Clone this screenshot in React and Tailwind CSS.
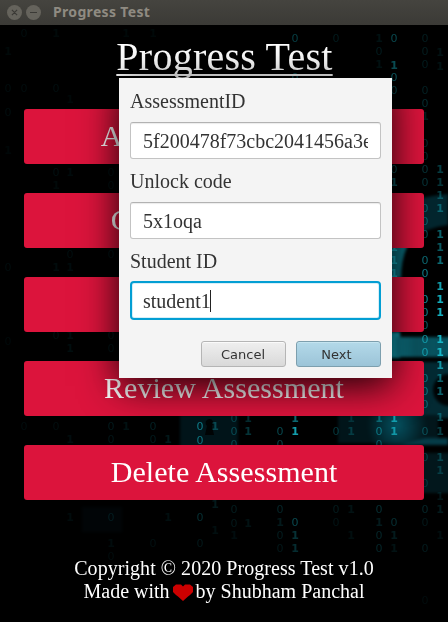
import React from 'react';

const MENU = ['Attempt Assessment', 'Create Assessment', 'Edit Assessment', 'Review Assessment', 'Delete Assessment'];

// Falling binary digits: [x centre, y centre, digit, opacity]
const DIGITS = [
  [295, 38, 0, 0.35], [295, 77, 0, 0.45],
  [336, 38, 0, 0.15], [379, 64, 1, 0.1], [379, 51, 0, 0.15], [379, 38, 1, 0.1],
  [394, 38, 0, 0.4], [394, 65, 1, 0.45], [394, 77, 0, 0.5], [394, 90, 0, 0.35],
  [425, 38, 0, 0.15], [425, 51, 0, 0.15], [425, 64, 0, 0.15], [425, 90, 0, 0.18], [425, 103, 0, 0.25], [425, 116, 1, 0.15],
  [425, 143, 0, 0.22], [425, 156, 0, 0.22], [425, 169, 0, 0.28], [425, 182, 0, 0.28],
  [440, 52, 1, 0.1], [440, 66, 1, 0.1],
  [440, 169, 1, 0.35], [440, 182, 1, 0.3], [440, 195, 1, 0.35], [440, 208, 1, 0.45],
  [394, 169, 0, 0.4], [394, 182, 1, 0.45],
  [425, 208, 0, 0.4], [425, 221, 0, 0.4], [425, 234, 0, 0.4],
  [440, 234, 1, 0.55], [440, 247, 1, 0.5], [440, 260, 1, 0.6],
  [394, 247, 1, 0.8], [394, 260, 1, 0.8], [394, 273, 1, 0.8],
  [425, 260, 0, 0.6], [425, 273, 0, 0.7],
  [440, 286, 1, 0.9], [440, 299, 1, 1], [440, 312, 1, 1],
  [425, 299, 0, 0.8], [425, 312, 0, 0.7], [425, 325, 0, 0.5],
  [425, 339, 0, 0.75], [440, 339, 1, 1], [425, 352, 0, 0.75], [440, 352, 1, 1],
  [440, 365, 1, 0.8], [425, 378, 0, 0.5], [440, 378, 1, 0.55],
  [425, 391, 0, 0.5], [440, 391, 1, 0.55], [425, 404, 0, 0.45], [440, 417, 1, 0.4],
  [425, 431, 0, 0.35], [440, 431, 1, 0.35], [440, 457, 1, 0.3], [440, 470, 1, 0.25], [425, 457, 0, 0.25], [425, 483, 0, 0.2], [440, 496, 1, 0.12],
  [394, 418, 1, 0.8], [394, 431, 1, 0.75], [379, 418, 1, 0.45], [379, 431, 0, 0.55], [379, 444, 0, 0.4],
  [336, 431, 0, 0.3], [351, 418, 1, 0.2], [351, 431, 1, 0.25],
  [295, 418, 1, 0.6], [295, 431, 1, 0.9], [280, 431, 0, 0.4], [280, 444, 0, 0.35],
  [234, 418, 0, 0.3], [234, 431, 0, 0.35], [234, 444, 0, 0.3], [248, 418, 1, 0.25], [248, 431, 1, 0.3],
  [200, 426, 0, 0.65], [200, 440, 0, 0.6], [215, 426, 1, 0.35],
  [200, 517, 0, 0.25], [215, 504, 1, 0.14], [200, 543, 0, 0.12], [215, 530, 1, 0.08], [168, 517, 1, 0.08],
  [234, 509, 0, 0.15], [234, 523, 0, 0.12], [248, 523, 1, 0.1], [234, 535, 1, 0.07],
  [280, 509, 0, 0.2], [295, 522, 0, 0.4], [295, 535, 1, 0.28], [295, 548, 1, 0.25], [280, 522, 1, 0.14], [280, 535, 0, 0.15], [280, 548, 0, 0.12],
  [336, 509, 0, 0.14], [351, 509, 1, 0.1], [336, 522, 0, 0.1], [351, 535, 1, 0.08],
  [379, 509, 0, 0.25], [379, 522, 1, 0.15], [394, 522, 0, 0.25], [379, 535, 0, 0.2], [394, 535, 1, 0.15], [379, 548, 0, 0.2], [394, 548, 1, 0.1],
  [425, 509, 0, 0.2], [440, 509, 1, 0.15], [425, 522, 0, 0.12], [425, 548, 0, 0.14], [440, 535, 1, 0.08], [425, 600, 0, 0.06],
  [24, 33, 0, 0.06], [8, 51, 1, 0.05], [56, 33, 1, 0.05], [8, 88, 0, 0.06], [24, 88, 0, 0.06], [56, 88, 0, 0.07], [70, 99, 1, 0.05], [8, 112, 0, 0.07],
  [126, 33, 1, 0.05], [153, 33, 1, 0.05], [8, 150, 1, 0.04], [56, 172, 0, 0.08], [70, 172, 1, 0.06], [56, 185, 1, 0.05], [111, 172, 0, 0.08], [111, 185, 0, 0.08],
  [56, 267, 1, 0.06], [70, 254, 0, 0.08], [70, 267, 1, 0.07], [111, 254, 0, 0.09], [8, 267, 0, 0.06],
  [8, 341, 0, 0.05], [56, 335, 0, 0.08], [70, 335, 1, 0.08], [70, 348, 1, 0.08], [111, 335, 0, 0.1], [111, 348, 0, 0.1],
  [56, 426, 0, 0.07], [24, 426, 0, 0.06], [70, 439, 1, 0.07], [111, 426, 0, 0.14], [111, 439, 0, 0.11], [126, 426, 1, 0.1],
  [153, 426, 0, 0.18], [153, 439, 0, 0.14], [168, 439, 1, 0.14],
  [70, 517, 1, 0.06], [111, 517, 0, 0.13], [111, 543, 1, 0.06], [153, 543, 0, 0.08], [111, 556, 0, 0.06],
];

function Backdrop() {
  return (
    <svg className="absolute inset-0 h-full w-full" viewBox="0 0 448 597" aria-hidden="true">
      <defs>
        <filter id="soft" x="-20%" y="-20%" width="140%" height="140%" colorInterpolationFilters="sRGB">
          <feGaussianBlur stdDeviation="1.5" />
        </filter>
        <filter id="glyph" colorInterpolationFilters="sRGB">
          <feGaussianBlur stdDeviation="0.35" />
        </filter>
        <linearGradient id="beam" x1="0" x2="1">
          <stop offset="0" stopColor="#0f8496" />
          <stop offset="0.35" stopColor="#0a5561" />
          <stop offset="1" stopColor="#07505c" />
        </linearGradient>
        <radialGradient id="glow">
          <stop offset="0" stopColor="#05505f" />
          <stop offset="1" stopColor="#05505f" stopOpacity="0" />
        </radialGradient>
      </defs>
      <g transform="translate(0 -25)">
        <g filter="url(#soft)">
          <path d="M388 208 Q420 196 448 194 V225 Q425 228 410 240 Q400 255 400 280 H388Z" fill="#03262e" />
          <path d="M388 240 H411 Q401 255 401 278 H388Z" fill="#0a6c7b" />
          <rect x="388" y="332" width="12" height="26" fill="#11a0b2" />
          <rect x="396" y="337" width="56" height="20" fill="url(#beam)" />
          <rect x="392" y="362" width="60" height="56" fill="#032a33" />
          <circle cx="449" cy="390" r="16" fill="#000304" />
          <rect x="338" y="415" width="100" height="28" fill="#02161b" />
          <ellipse cx="397" cy="425" rx="30" ry="34" fill="url(#glow)" />
          <path d="M425 438 H448 V445 H400Z" fill="#053b47" />
          <rect x="422" y="453" width="30" height="40" fill="#02171c" />
          <rect x="180" y="415" width="58" height="33" fill="#02151a" />
          <rect x="82" y="507" width="40" height="25" fill="#010507" />
        </g>
        <path d="M209 419a4 4 0 0 1 3 7l2 9h-9l2-9a4 4 0 0 1 2-7z" fill="#000405" />
        <g
          fill="#19c3d4"
          fontFamily="'DejaVu Sans', sans-serif"
          fontSize="11"
          textAnchor="middle"
          filter="url(#glyph)"
        >
          {DIGITS.map(([x, y, d, o], i) => (
            <text key={i} x={x} y={y + 4} opacity={o * 0.9} fontWeight={d ? 700 : 400}>
              {d}
            </text>
          ))}
        </g>
      </g>
    </svg>
  );
}

function TitleBar() {
  return (
    <header className="flex h-[25px] items-center bg-linear-to-b from-[#45443f] to-[#3b3a36] pl-[7px]">
      <svg width="36" height="17" viewBox="0 0 36 17" fill="none" className="mt-[-1px]">
        <circle cx="7.5" cy="8.5" r="7.5" fill="#65635c" />
        <circle cx="26.5" cy="8.5" r="7.5" fill="#65635c" />
        <path d="M4.9 5.9l5.2 5.2M10.1 5.9l-5.2 5.2M23 8.5h7" stroke="#3b3a36" strokeWidth="1.2" />
      </svg>
      <span className="mt-[-2px] ml-[10px] font-['Noto_Sans'] text-[14px] leading-none font-bold tracking-[0.33px] text-[#8f8b82]">
        Progress Test
      </span>
    </header>
  );
}

function Field({ label, value, focused }) {
  return (
    <div className="h-20">
      <div className="h-[25px] pt-px text-[20px] leading-[23px] text-[#333]">{label}</div>
      <div
        className={
          focused
            ? 'mt-[7px] h-[39px] rounded-[4px] border-2 border-[#039ed3] bg-white px-[11px] shadow-[inset_0_0_0_1px_#d6eff8]'
            : 'mt-2 h-[37px] rounded-[3px] border border-[#c3c3c3] border-t-[#b2b2b2] bg-white px-3 shadow-[inset_0_2px_1px_-1px_#ececec]'
        }
      >
        <div className="flex h-full items-center overflow-hidden pt-[2px] text-[20px] leading-[33px] whitespace-nowrap text-[#333]">
          {value}
          {focused && <span className="-mt-[2px] -ml-px h-[22px] w-px shrink-0 bg-[#222]" />}
        </div>
      </div>
    </div>
  );
}

function Dialog() {
  return (
    <section className="absolute top-[53px] left-[119px] h-[300px] w-[273px] bg-[#f4f4f4] pt-[11px] pr-[11px] pl-[11px] shadow-[0_8px_36px_rgba(0,0,0,0.9)]">
      <Field label="AssessmentID" value="5f200478f73cbc2041456a3e" />
      <Field label="Unlock code" value="5x1oqa" />
      <Field label="Student ID" value="student1" focused />
      <div className="mt-3 flex justify-end gap-[10px] font-['DejaVu_Sans'] text-[13px] leading-none text-[#333]">
        <button className="h-[26px] w-[85px] rounded-[3px] border border-[#b5b5b5] bg-linear-to-b from-[#efefef] to-[#d9d9d9] pr-px shadow-[inset_0_1px_0_#fafafa]">
          Cancel
        </button>
        <button className="h-[26px] w-[85px] rounded-[3px] border border-[#7d9fae] bg-linear-to-b from-[#b3d9e9] to-[#9cc4d8] pr-1 shadow-[inset_0_1px_0_#c4e4f0]">
          Next
        </button>
      </div>
    </section>
  );
}

export default function App() {
  return (
    <div className="h-[622px] w-[448px] overflow-hidden bg-black font-['Liberation_Serif',serif]">
      <TitleBar />
      <main className="relative h-[597px]">
        <Backdrop />
        <div className="relative flex h-full flex-col items-center text-white">
          <h1 className="mt-[9px] ml-px h-[45px] text-[40px] leading-[45px] tracking-[0.25px] whitespace-nowrap underline decoration-2 underline-offset-[4px] [text-decoration-skip-ink:none]">
            Progress Test
          </h1>
          <nav className="mt-[30px] flex w-[400px] flex-col gap-[29px]">
            {MENU.map((item) => (
              <button key={item} className="h-[55px] rounded-[3px] bg-[#dc143c] pb-[2px] text-[30px] leading-[34px] tracking-[0.05px]">
                {item}
              </button>
            ))}
          </nav>
          <footer className="mt-[57px] flex flex-col items-center text-[20px] leading-[23px]">
            <p className="tracking-[0.05px]">Copyright © 2020 Progress Test v1.0</p>
            <p className="flex items-center">
              Made with
              <svg width="20" height="17" viewBox="0 0 20 17" className="mx-[3px] mt-[2px]">
                <path d="M10 2.500L8 .5H3L0 3V8L3 11L5 12.500L10 17L15 12.500L17 11L20 8V3L17 .5H12Z" fill="#cc0000" />
              </svg>
              by Shubham Panchal
            </p>
          </footer>
        </div>
        <Dialog />
      </main>
    </div>
  );
}
